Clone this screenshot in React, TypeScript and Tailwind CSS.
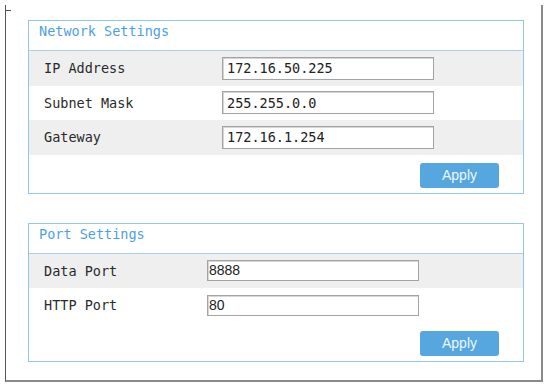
import React from 'react';

type Field = { label: string; value: string };

const mono = "font-['DejaVu_Sans_Mono','Liberation_Mono',monospace]";
const sans = "font-['Liberation_Sans',Arial,sans-serif]";

const SettingsBox: React.FC<{
  title: string;
  fields: Field[];
  inputLeft: string;
  inputClass: string;
}> = ({ title, fields, inputLeft, inputClass }) => (
  <div className="border border-[#92c6ec] bg-white">
    <div className={`h-[30px] pl-[10px] pt-[1px] text-[13.5px] leading-[18px] text-[#4d9fe6] border-b border-[#a9cfe9] ${mono}`}>
      {title}
    </div>
    {fields.map((f, i) => (
      <div
        key={f.label}
        className={`h-[34.5px] flex items-center ${i % 2 === 0 ? 'bg-[#efefef]' : 'bg-white'}`}
      >
        <div className={`pl-[15px] text-[13.5px] text-[#2a2a2a] ${inputLeft} shrink-0 ${mono}`}>{f.label}</div>
        <input
          readOnly
          value={f.value}
          className={`bg-white border border-[#a3a3a3] shadow-[inset_1px_1px_0_#d6d6d6] outline-none text-[#222] ${inputClass}`}
        />
      </div>
    ))}
    <div className="h-[38px] pt-[8px] flex justify-end pr-[24px]">
      <button
        className={`w-[79px] h-[25px] rounded-[3px] bg-[#56a7df] text-[14px] text-[#eef6fc] ${sans}`}
      >
        Apply
      </button>
    </div>
  </div>
);

export default function App() {
  return (
    <div className="w-[550px] h-[389px] bg-white relative">
      <div className="absolute left-[5px] top-[5px] w-[6px] h-px bg-[#555]" />
      <div className="ml-[5px] pt-[15px] w-[538px] h-[377px] border-l border-l-[#555] border-r-2 border-r-[#8a8a8a] border-b-2 border-b-[#8a8a8a] mt-[5px] pl-[22px] pr-[17px] flex flex-col">
        <SettingsBox
          title="Network Settings"
          inputLeft="w-[193px]"
          inputClass={`w-[212px] h-[23px] px-[4px] text-[13.5px] ${mono}`}
          fields={[
            { label: 'IP Address', value: '172.16.50.225' },
            { label: 'Subnet Mask', value: '255.255.0.0' },
            { label: 'Gateway', value: '172.16.1.254' },
          ]}
        />
        <div className="h-[29px]" />
        <SettingsBox
          title="Port Settings"
          inputLeft="w-[178px]"
          inputClass={`w-[212px] h-[21px] px-[1px] text-[14px] ${sans}`}
          fields={[
            { label: 'Data Port', value: '8888' },
            { label: 'HTTP Port', value: '80' },
          ]}
        />
      </div>
    </div>
  );
}
